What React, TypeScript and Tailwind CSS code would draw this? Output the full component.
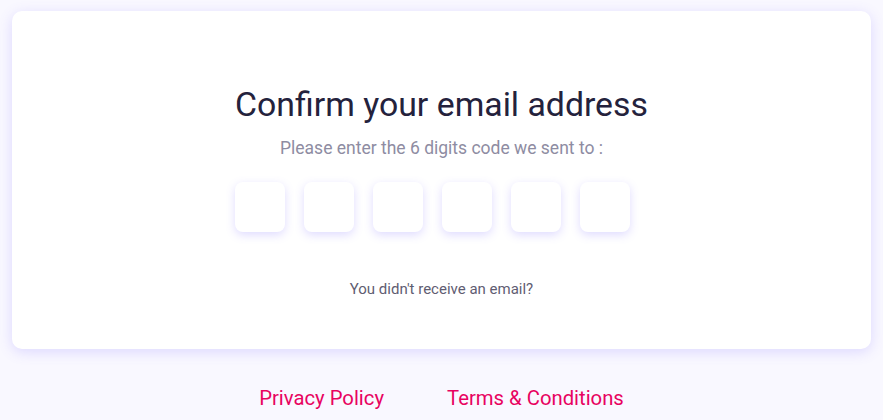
import { FC } from 'react';

const App: FC = () => {
  const digits = [0, 1, 2, 3, 4, 5];

  return (
    <div className="min-h-screen bg-[#f9f8ff] px-3 pt-[11px] font-['Roboto',sans-serif]">
      {/* Card */}
      <div className="flex flex-col items-center rounded-[10px] bg-white pt-[74px] pb-[51px] shadow-[0_3px_14px_rgba(110,90,255,0.2)]">
        <h1 className="text-[33.8px] leading-[40px] font-normal text-[#24223c]">
          Confirm your email address
        </h1>
        <p className="mt-[12px] text-[17.5px] leading-[22px] text-[#8e8ca2]">
          Please enter the 6 digits code we sent to :
        </p>
        <div className="mt-[23px] flex gap-[19px] pr-[18px]">
          {digits.map((d) => (
            <input
              key={d}
              type="text"
              maxLength={1}
              className="h-[50px] w-[50px] rounded-[8px] bg-white text-center text-xl outline-none shadow-[0_3px_10px_rgba(110,90,255,0.22)]"
            />
          ))}
        </div>
        <p className="mt-[48px] text-[15px] leading-[18px] text-[#5f5d72]">
          You didn't receive an email?
        </p>
      </div>

      {/* Footer */}
      <div className="mt-[37px] flex justify-center gap-[63px]">
        <a href="#" className="text-[20.3px] leading-[24px] text-[#e8035f]">
          Privacy Policy
        </a>
        <a href="#" className="text-[20.3px] leading-[24px] text-[#e8035f]">
          Terms &amp; Conditions
        </a>
      </div>
    </div>
  );
};

export default App;
